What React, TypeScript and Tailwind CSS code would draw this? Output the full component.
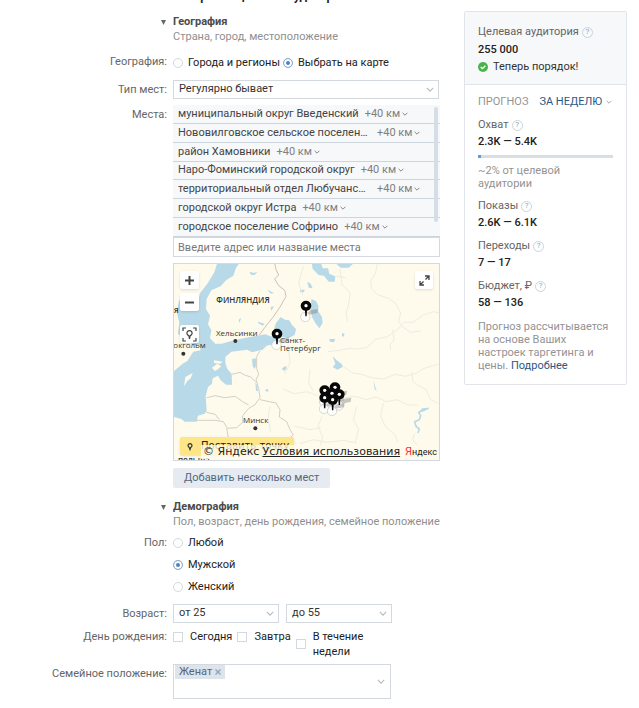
import type { ReactNode } from "react";

const places = [
  { name: "муниципальный округ Введенский" },
  { name: "Нововилговское сельское поселение", long: true },
  { name: "район Хамовники" },
  { name: "Наро-Фоминский городской округ" },
  { name: "территориальный отдел Любучанский", long: true },
  { name: "городской округ Истра" },
  { name: "городское поселение Софрино" },
];

const metrics = [
  { name: "Показы", value: "2.6K — 6.1K" },
  { name: "Переходы", value: "7 — 17" },
  { name: "Бюджет, ₽", value: "58 — 136" },
];

const pins = [
  [408, 170], [321, 254], [464, 424], [495, 415], [486, 433], [508, 436], [464, 446], [488, 452],
];

function Chevron({ small = false }: { small?: boolean }) {
  return (
    <svg viewBox="0 0 10 6" className={small ? "h-1 w-[6px]" : "h-[5px] w-2"} fill="none" stroke="currentColor" strokeWidth={small ? 1.6 : 1.5}>
      <path d="M1 1l4 4 4-4" />
    </svg>
  );
}

function Row({ label, htmlFor, className = "", children }: { label: string; htmlFor?: string; className?: string; children: ReactNode }) {
  return (
    <div className={`flex gap-[6px] ${className}`}>
      <label htmlFor={htmlFor} className="w-[167px] shrink-0 pt-[2px] text-right leading-4 text-[#656565]">{label}</label>
      <div className="min-w-0 flex-1">{children}</div>
    </div>
  );
}

function Section({ title, note, className = "" }: { title: string; note: string; className?: string }) {
  return (
    <div className={`pl-[161px] ${className}`}>
      <button className="flex items-center gap-[7px] leading-4 font-bold text-[#4a4a4a]">
        <svg viewBox="0 0 5 5" className="h-[5px] w-[5px]" fill="#666"><path d="M0 0h5L2.5 5z" /></svg>
        {title}
      </button>
      <p className="pl-3 leading-[14px] text-[#8f8f8f]">{note}</p>
    </div>
  );
}

function Choice({ type, name, label, checked = false, className = "" }: { type: "radio" | "checkbox"; name: string; label: string; checked?: boolean; className?: string }) {
  return (
    <label className={`flex items-center text-[#222] ${className}`}>
      <input
        type={type}
        name={name}
        defaultChecked={checked}
        className={`h-[10px] w-[10px] shrink-0 appearance-none border border-[#d3d9de] bg-white checked:border-[#8fb0d4] checked:bg-[#5181b8] checked:shadow-[inset_0_0_0_2px_white] ${type === "radio" ? "rounded-full" : ""}`}
      />
      <span>{label}</span>
    </label>
  );
}

function Select({ id, label, value, className = "" }: { id: string; label?: string; value: string; className?: string }) {
  return (
    <div className={`relative ${className}`}>
      <select id={id} aria-label={label} className="block h-[19px] w-full appearance-none border border-[#d3d9de] bg-white pb-[2px] pl-[5px] leading-4 text-[#333]">
        <option>{value}</option>
      </select>
      <span className="pointer-events-none absolute top-[7px] right-[5px] text-[#b5bcc4]"><Chevron /></span>
    </div>
  );
}

function Help() {
  return (
    <button aria-label="Подсказка" className="flex h-[11px] w-[11px] items-center justify-center rounded-full border border-[#c9d3df] text-[8px] leading-none text-[#8fa3ba]">?</button>
  );
}

function MapView() {
  return (
    <div className="relative mt-[6px] h-[198px] w-full overflow-hidden border border-[#d3d9de] bg-[#fefbec]">
      <svg viewBox="12 13 798 588" preserveAspectRatio="xMinYMin slice" className="h-full w-full font-['Open_Sans',sans-serif]">
        <g fill="#b8d9e8">
          <path d="M145 0L133 38 112 72 90 100 82 132 50 142 28 120 20 155 28 190 24 222 55 248 88 258 92 272 70 276 62 288 52 304 38 312 12 334V472L34 478 44 486 80 486 84 468 104 462 110 455 107 410 114 382 126 372 128 356 144 348 152 362 168 375 186 375 185 342 172 328 166 310 166 292 184 276 232 270 246 278 278 270 290 258 310 254 326 250 324 232 300 230 286 224 262 228 240 232 210 238 184 244 155 252 136 252 120 236 124 212 114 194 120 168 108 148 110 118 124 92 152 80 168 62 190 48 198 24 216 0z" />
          <path d="M312 208L318 190 332 172 345 180 358 182 366 196 378 208 374 226 358 234 336 232 320 226z" />
          <path d="M424 0L428 28 446 46 462 48 476 66 494 66 496 50 478 42 474 26 458 26 450 0zM496 10L512 24 536 24 552 10zM412 66L422 72 428 86 416 84zM390 90L404 90 402 98 390 98zM424 118L438 124 446 140 444 154 456 172 458 190 448 206 436 190 426 172 422 152zM478 238L496 238 492 248 480 246zM516 220L524 222 520 232 516 228zM488 290L500 302 516 314 518 322 502 330 488 322 496 312zM336 326L348 318 350 328 340 334zM238 36L252 40 262 36 254 46 244 46zM292 90L312 100 302 102zM302 142L312 140 304 154zM264 186L284 192 278 198 264 190zM206 180L214 174 208 190zM246 298L258 296 260 314 254 328 248 320zM256 366L262 380 264 394 258 394zM288 388L296 390 294 396 286 394zM610 362L616 382 620 394 614 388z" />
        </g>
        <g fill="#fefbec">
          <path d="M42 380L46 352 68 340 62 356 52 364zM132 302L158 306 150 312 132 310zM126 324L142 312 154 320 142 330 134 334z" />
        </g>
        <path d="M776 446L760 452 746 458 752 468 748 480 734 486 738 500 748 508 744 520" fill="none" stroke="#b8d9e8" strokeWidth="5" strokeLinejoin="round" />
        <path d="M748 458L756 446 776 444 764 454z" fill="#b8d9e8" />
        <path d="M312 0L318 30 326 46 314 58 326 78 344 92 348 110 330 142 308 174 284 204 268 226" fill="none" stroke="#c9c1ba" strokeWidth="3" />
        <g fill="none" stroke="#d3cfc4" strokeWidth="3" strokeLinejoin="round">
          <path d="M270 274L260 290 260 326 266 344 258 360 266 386 270 414 254 436 236 446 218 468 218 488 200 504 172 506 160 486 136 482 80 482M110 414L136 408 164 414 196 410 218 426 236 436M186 344L210 338 224 346 242 352 256 366M270 420L298 426 318 430 330 450 328 472 350 486 360 510 370 526 350 542M110 458L136 464 148 480M170 506L176 540 186 556" />
        </g>
        <g fill="none" stroke="#eeecdf" strokeWidth="3" strokeLinejoin="round">
          <path d="M510 28L516 76 540 98 536 134 528 160 532 186M500 50L526 54M622 12L616 42 602 62 604 86 624 106 656 116 678 132 692 160 686 186 698 202 722 218 752 214M698 188L730 188 760 166 790 156 810 160M474 276L510 272 536 266 560 268 590 264 618 238 650 232 680 212 698 194M668 210L672 242 660 254 662 272M520 320L548 340 576 344 604 354 640 358 676 344 706 350 736 342 762 326 810 312M726 336L728 364 746 378 768 390 782 420 806 432M520 414L556 410 590 420 618 412 648 426 682 420 712 436 742 436M400 20L386 70 398 106M354 256L360 310 344 342M340 388L372 402 410 396 444 408M420 330L416 370 430 394M456 470L444 500 458 532 450 560M560 440L550 480 566 510 556 546M640 430L632 470 646 500 674 524 684 548M734 520L728 540 750 568M300 440L294 476 302 516M374 500L420 510 452 504M390 552L430 540 470 548 520 542 560 550" />
        </g>
        <g fill="#333" fontSize="24">
          <text x="139" y="130" fontSize="24" fontWeight="600">ФИНЛЯНДИЯ</text>
          <text x="12" y="161" fontWeight="600">я</text>
          <text x="138" y="228">Хельсинки</text>
          <text x="10" y="266">окгольм</text>
          <text x="330" y="249">Санкт-</text>
          <text x="330" y="275">Петербург</text>
          <text x="219" y="490">Минск</text>
          <text x="24" y="609" fontWeight="600">польша</text>
          <circle cx="196" cy="244" r="6" /><circle cx="40" cy="282" r="6" /><circle cx="256" cy="506" r="6" />
        </g>
        {pins.map(([x, y]) => (
          <g key={`${x}-${y}`} transform={`translate(${x} ${y})`}>
            <path d="M0-4L12-18 36-22 34-10 18-6z" fill="#777" opacity=".4" />
            <circle cx="-2" cy="2" r="14" fill="#fff" stroke="#bdbdbd" strokeWidth="2" opacity=".85" />
          </g>
        ))}
        {pins.map(([x, y]) => (
          <g key={`${x}-${y}`} transform={`translate(${x} ${y})`}>
            <path d="M-2 0L-3-17C-10-18-16-24-16-32A16 15 0 0 1 16-32C16-24 10-18 3-17L2 0z" fill="#080808" />
            <circle cy="-32" r="5" fill="#fff" />
          </g>
        ))}
      </svg>
      <div className="absolute top-[7px] left-[6px] flex flex-col gap-1 text-[#444]">
        <button aria-label="Приблизить" className="flex h-[18px] w-[19px] items-center justify-center rounded-xs bg-white shadow-sm">
          <svg viewBox="0 0 9 9" className="h-[9px] w-[9px]" stroke="currentColor" strokeWidth="2"><path d="M0 4.5h9M4.5 0v9" /></svg>
        </button>
        <button aria-label="Отдалить" className="flex h-[18px] w-[19px] items-center justify-center rounded-xs bg-white shadow-sm">
          <svg viewBox="0 0 9 9" className="h-[9px] w-[9px]" stroke="currentColor" strokeWidth="2"><path d="M0 4.5h9" /></svg>
        </button>
        <button aria-label="Моё местоположение" className="mt-[10px] flex h-[18px] w-[19px] items-center justify-center rounded-xs bg-white shadow-sm">
          <svg viewBox="0 0 15 15" className="h-[15px] w-[15px]" fill="none" stroke="currentColor" strokeWidth="1.2">
            <path d="M1 4V1h3M11 1h3v3M14 11v3h-3M4 14H1v-3M7.5 12L6.8 8.7A2.6 2.6 0 1 1 8.2 8.7z" />
          </svg>
        </button>
      </div>
      <button aria-label="На весь экран" className="absolute top-[7px] right-[6px] flex h-[18px] w-[18px] items-center justify-center rounded-xs bg-white text-[#444] shadow-sm">
        <svg viewBox="0 0 11 11" className="h-[11px] w-[11px]" fill="none" stroke="currentColor" strokeWidth="1.3"><path d="M6 1h4v4M10 1L6.500 4.500M5 10H1V6M1 10l3.500-3.500" /></svg>
      </button>
      <button className="absolute bottom-[5px] left-[6px] flex h-[18px] w-[114px] items-center gap-[8px] rounded-xs bg-[#fde588] pl-[7px] font-['DejaVu_Sans',sans-serif] text-[10px] leading-[18px] whitespace-nowrap text-[#222] shadow-sm">
        <svg viewBox="0 0 8 10" className="h-[9px] w-[6px]" fill="none" stroke="#333" strokeWidth="1.6"><path d="M4 9L3 6.2A2.6 2.6 0 1 1 5 6.2z" /></svg>
        Поставить точку
      </button>
      <div className="absolute right-0 bottom-[1px] flex items-center gap-[3px] bg-[#fefbec]/80 pr-[2px] pl-[2px] font-['DejaVu_Sans',sans-serif] text-[11px] leading-[14px] whitespace-nowrap text-[#222]">
        <span>© Яндекс</span>
        <a href="#terms" className="underline">Условия использования</a>
        <span className="pl-[2px] font-['Liberation_Sans_Narrow','Roboto',sans-serif] text-[9px]"><span className="text-[11px] text-[#f33]">Я</span>ндекс</span>
      </div>
    </div>
  );
}

export default function App() {
  return (
    <div className="flex items-start bg-white pr-3 font-[Roboto,sans-serif] text-[11px]">
      <main className="min-w-0 flex-1">
        <h1 className="flex h-[3px] items-end overflow-hidden pl-[173px] text-xs leading-[14px] font-bold text-[#222]">
          Настройки целевой аудитории
        </h1>
        <Section title="География" note="Страна, город, местоположение" className="mt-[11px]" />
        <Row label="География:" className="mt-[8px]">
          <div className="flex items-center gap-[3px] pt-[2px] leading-[18px] whitespace-nowrap">
            <Choice type="radio" name="geo" label="Города и регионы" className="gap-[5px]" />
            <Choice type="radio" name="geo" label="Выбрать на карте" checked className="gap-[5px]" />
          </div>
        </Row>
        <Row label="Тип мест:" htmlFor="kind" className="mt-2">
          <Select id="kind" value="Регулярно бывает" className="mr-[1px]" />
        </Row>
        <Row label="Места:" htmlFor="place" className="mt-[6px]">
          <div className="relative">
            <ul className="grid h-[132px] auto-rows-fr bg-[#f7f8fa]">
              {places.map((p) => (
                <li key={p.name} className="flex items-center gap-[6px] border-b border-[#ccd5de] pl-[5px] leading-4 text-[#444]">
                  <span className={p.long ? "w-[193px] truncate" : ""}>{p.name}</span>
                  <button className="flex items-center gap-[2px] text-[#808080]">+40 км <Chevron small /></button>
                </li>
              ))}
            </ul>
            <span className="absolute top-[2px] right-[2px] h-[115px] w-1 rounded-sm bg-[#d5dde6]" />
          </div>
          <input id="place" placeholder="Введите адрес или название места" className="block h-5 w-full border border-[#d3d9de] px-1 placeholder:text-[#777]" />
          <MapView />
          <button className="mt-[7px] h-5 rounded-xs bg-[#e5ebf1] px-[11px] leading-5 text-[#55677d]">Добавить несколько мест</button>
        </Row>
        <Section title="Демография" note="Пол, возраст, день рождения, семейное положение" className="mt-[11px]" />
        <Row label="Пол:" className="mt-1">
          <div className="flex flex-col items-start gap-[6px] pt-[2px] leading-4">
            <Choice type="radio" name="sex" label="Любой" className="gap-[5px]" />
            <Choice type="radio" name="sex" label="Мужской" checked className="gap-[5px]" />
            <Choice type="radio" name="sex" label="Женский" className="gap-[5px]" />
          </div>
        </Row>
        <Row label="Возраст:" htmlFor="from" className="mt-[9px]">
          <div className="flex gap-[7px]">
            <Select id="from" value="от 25" className="w-[106px]" />
            <Select id="to" label="Возраст до" value="до 55" className="w-[106px]" />
          </div>
        </Row>
        <Row label="День рождения:" className="mt-1">
          <div className="flex items-start gap-[5px] pt-[2px] leading-[15px]">
            <Choice type="checkbox" name="today" label="Сегодня" className="gap-[7px]" />
            <Choice type="checkbox" name="tomorrow" label="Завтра" className="gap-[7px]" />
            <Choice type="checkbox" name="week" label="В течение недели" className="w-[80px] gap-[7px]" />
          </div>
        </Row>
        <Row label="Семейное положение:" htmlFor="family" className="mt-[5px]">
          <div className="flex h-[35px] w-[218px] items-center justify-between border border-[#d3d9de] pr-[5px] pl-[1px]">
            <span className="flex h-[14px] items-center gap-[3px] self-start bg-[#dee4ec] px-1 text-[#55677d]">
              Женат
              <button aria-label="Убрать" className="text-[#8fa3bf]">
                <svg viewBox="0 0 6 6" className="h-[6px] w-[6px]" stroke="currentColor" strokeWidth="1.4"><path d="M.5.5l5 5M5.5.5l-5 5" /></svg>
              </button>
            </span>
            <button id="family" aria-label="Открыть список" className="text-[#b5bcc4]"><Chevron /></button>
          </div>
        </Row>
      </main>
      <aside className="mt-[11px] ml-6 w-[163px] shrink-0 rounded-xs border border-[#e1e5ea] leading-[14px] text-[#656565]">
        <div className="border-b border-[#e1e5ea] bg-[#f7f8fa] px-[13px] pt-[13px] pb-[10px]">
          <div className="flex items-center gap-[3px]">Целевая аудитория <Help /></div>
          <div className="mt-1 font-medium text-[#222]">255 000</div>
          <div className="mt-[3px] flex items-center gap-[5px] text-[#333]">
            <svg viewBox="0 0 10 10" className="h-[10px] w-[10px]"><circle cx="5" cy="5" r="5" fill="#4bb34b" /><path d="M2.7 5l1.7 1.7 3-3" fill="none" stroke="#fff" strokeWidth="1.3" /></svg>
            Теперь порядок!
          </div>
        </div>
        <div className="px-[13px] pt-[10px] pb-3">
          <div className="flex items-center whitespace-nowrap text-[#939393]">
            ПРОГНОЗ
            <button className="ml-[11px] flex items-center gap-1 text-[#2a5885]">ЗА НЕДЕЛЮ <span className="text-[#a0a7b0]"><Chevron small /></span></button>
          </div>
          <div className="mt-[9px] flex items-center gap-[3px]">Охват <Help /></div>
          <div className="mt-[3px] font-medium text-[#222]">2.3K — 5.4K</div>
          <div className="mt-[6px] h-[3px] bg-[#d8dfe3]"><div className="h-full w-[2%] bg-[#5b9be6]" /></div>
          <p className="mt-[6px] leading-[13px] text-[#939393]">~2% от целевой аудитории</p>
          {metrics.map((m) => (
            <div key={m.name} className="mt-[9px]">
              <div className="flex items-center gap-[3px]">{m.name} <Help /></div>
              <div className="mt-[3px] font-medium text-[#222]">{m.value}</div>
            </div>
          ))}
          <p className="mt-[10px] leading-[13px] text-[#939393]">
            Прогноз рассчитывается на основе Ваших настроек таргетинга и цены. <a href="#more" className="text-[#2a5885]">Подробнее</a>
          </p>
        </div>
      </aside>
    </div>
  );
}
